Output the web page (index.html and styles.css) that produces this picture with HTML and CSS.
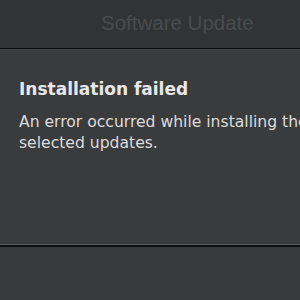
FILE: index.html
```html
<!DOCTYPE html>
<html>
<head>
<meta charset="utf-8">
<link rel="stylesheet" href="styles.css">
</head>
<body>
<div class="titlebar"><span class="title">Software Update</span></div>
<div class="dialog">
  <div class="heading">Installation failed</div>
  <div class="message">An error occurred while installing the selected updates.</div>
</div>
<div class="bottom"></div>
</body>
</html>
```
FILE: styles.css
```css
html, body {
  margin: 0;
  padding: 0;
  width: 300px;
  height: 300px;
  overflow: hidden;
  background: #38393b;
  font-family: "DejaVu Sans", sans-serif;
}
.titlebar {
  height: 48px;
  background: #323335;
  border-bottom: 1px solid #0f0f10;
  position: relative;
  overflow: hidden;
}
.title {
  position: absolute;
  left: 101px;
  top: 13px;
  font-family: "Liberation Sans", Arial, sans-serif;
  font-size: 20.5px;
  line-height: 20px;
  color: #4a4b4d;
  white-space: nowrap;
}
.dialog {
  height: 196px;
  background: #3a3b3d;
  border-top: 1px solid #434446;
  padding: 29px 0 0 19px;
  box-sizing: border-box;
  border-bottom: 1px solid #5a5b5d;
  overflow: hidden;
}
.heading {
  font-size: 17px;
  font-weight: bold;
  color: #e8e8e8;
  white-space: nowrap;
  line-height: 20px;
}
.message {
  margin-top: 13px;
  font-size: 15.6px;
  line-height: 21px;
  color: #dcdcdc;
  width: 330px;
}
.bottom {
  height: 2px;
  background: #121213;
}
```
